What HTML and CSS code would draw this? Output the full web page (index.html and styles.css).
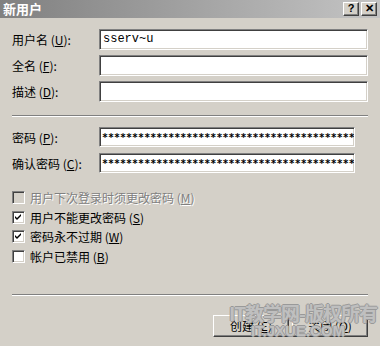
FILE: index.html
```html
<!DOCTYPE html>
<html lang="zh-CN">
<head>
    <meta charset="UTF-8">
    <title>新用户</title>
    <link rel="stylesheet" href="styles.css">
</head>
<body>
<div class="dialog">
    <div class="titlebar">
        <span class="title">新用户</span>
        <div class="tb-buttons">
            <span class="tb-btn">?</span>
            <span class="tb-btn">&#x2715;</span>
        </div>
    </div>
    <div class="content">
        <div class="fields">
            <div class="row">
                <label>用户名 (<u>U</u>):</label>
                <div class="input">sserv~u</div>
            </div>
            <div class="row">
                <label>全名 (<u>F</u>):</label>
                <div class="input"></div>
            </div>
            <div class="row">
                <label>描述 (<u>D</u>):</label>
                <div class="input"></div>
            </div>
        </div>
        <div class="sep"></div>
        <div class="fields pw">
            <div class="row">
                <label>密码 (<u>P</u>):</label>
                <div class="input short stars">******************************************</div>
            </div>
            <div class="row">
                <label>确认密码 (<u>C</u>):</label>
                <div class="input short stars">******************************************</div>
            </div>
        </div>
        <div class="checks">
            <div class="check disabled"><span class="box"></span>用户下次登录时须更改密码 (<u>M</u>)</div>
            <div class="check"><span class="box"><svg width="7" height="7" viewBox="0 0 7 7"><path d="M0 2 L2 4 L6 0 L6 2 L2 6 L0 4 Z" fill="#000"/></svg></span>用户不能更改密码 (<u>S</u>)</div>
            <div class="check"><span class="box"><svg width="7" height="7" viewBox="0 0 7 7"><path d="M0 2 L2 4 L6 0 L6 2 L2 6 L0 4 Z" fill="#000"/></svg></span>密码永不过期 (<u>W</u>)</div>
            <div class="check"><span class="box"></span>帐户已禁用 (<u>B</u>)</div>
        </div>
        <div class="sep bottom"></div>
        <div class="actions">
            <span class="btn">创建 (<u>E</u>)</span>
            <span class="btn">关闭 (<u>O</u>)</span>
        </div>
        <div class="watermark">
            <div class="wm1">IT教学网-版权所有</div>
            <div class="wm2">IT.JXUE.COM</div>
        </div>
    </div>
</div>
</body>
</html>
```

FILE: styles.css
```css
*{
    margin: 0px;
    padding: 0px;
    box-sizing: border-box;
}
body{
    font-family: "Noto Sans CJK SC", "Liberation Sans", sans-serif;
    font-size: 12px;
    color: #000;
    background: #d4d0c8;
}
.dialog{
    width: 380px;
    height: 346px;
    background: #d4d0c8;
    position: relative;
    overflow: hidden;
}
.titlebar{
    height: 18px;
    background: linear-gradient(to right, #808080, #c4c4c4);
    display: flex;
    align-items: center;
    justify-content: space-between;
    padding: 0 3px 0 3px;
}
.title{
    color: #fff;
    font-weight: bold;
    font-size: 13px;
    line-height: 14px;
}
.tb-buttons{
    display: flex;
    gap: 2px;
}
.tb-btn{
    width: 16px;
    height: 14px;
    background: #d4d0c8;
    border-top: 1px solid #fff;
    border-left: 1px solid #fff;
    border-right: 1px solid #404040;
    border-bottom: 1px solid #404040;
    box-shadow: inset -1px -1px #808080;
    font-family: "Liberation Sans", sans-serif;
    font-weight: bold;
    font-size: 11px;
    line-height: 11px;
    text-align: center;
}
.content{
    padding: 11px 12px 0 12px;
}
.fields{
    display: flex;
    flex-direction: column;
    gap: 5px;
}
.row{
    display: flex;
    align-items: center;
    height: 21px;
}
.row label{
    width: 87px;
    flex: none;
}
.input{
    width: 269px;
    height: 100%;
    background: #fff;
    border-top: 1px solid #808080;
    border-left: 1px solid #808080;
    border-right: 1px solid #fff;
    border-bottom: 1px solid #fff;
    box-shadow: inset 1px 1px #404040, inset -1px -1px #d4d0c8;
    padding: 1px 3px;
    font-family: "Liberation Mono", monospace;
    font-size: 12px;
    line-height: 17px;
    overflow: hidden;
    white-space: nowrap;
}
.input.short{
    width: 256px;
}
.stars{
    font-family: "DejaVu Sans Mono", monospace;
    font-size: 10px;
    font-weight: bold;
    line-height: 18px;
    padding-left: 2px;
}
.sep{
    height: 2px;
    border-top: 1px solid #808080;
    border-bottom: 1px solid #fff;
    margin-top: 13px;
}
.pw{
    margin-top: 10px;
    gap: 6px;
}
.pw .row{
    height: 20px;
}
.checks{
    margin-top: 15px;
    display: flex;
    flex-direction: column;
}
.check{
    display: flex;
    align-items: center;
    height: 19.5px;
}
.check .box{
    width: 13px;
    height: 13px;
    flex: none;
    margin-right: 5px;
    background: #fff;
    border-top: 1px solid #808080;
    border-left: 1px solid #808080;
    border-right: 1px solid #fff;
    border-bottom: 1px solid #fff;
    box-shadow: inset 1px 1px #404040, inset -1px -1px #d4d0c8;
    display: flex;
    align-items: center;
    justify-content: center;
}
.check.disabled{
    color: #808080;
    text-shadow: 1px 1px #fff;
}
.check.disabled .box{
    background: #d4d0c8;
}
.sep.bottom{
    margin-top: 28px;
}
.actions{
    margin-top: 19px;
    display: flex;
    justify-content: flex-end;
    gap: 3px;
}
.btn{
    width: 76px;
    height: 22px;
    background: #d4d0c8;
    border-top: 1px solid #fff;
    border-left: 1px solid #fff;
    border-right: 1px solid #404040;
    border-bottom: 1px solid #404040;
    box-shadow: inset -1px -1px #808080;
    text-align: center;
    line-height: 19px;
}
.watermark{
    position: absolute;
    left: 228px;
    top: 302px;
    width: 150px;
    text-align: center;
    color: rgba(255, 255, 255, 0.4);
    text-shadow: 1px 0 #999, -1px 0 #999, 0 1px #999, 0 -1px #999;
    font-weight: bold;
    pointer-events: none;
}
.wm1{
    font-size: 19px;
    line-height: 22px;
    letter-spacing: -1px;
}
.wm2{
    font-family: "Liberation Sans", sans-serif;
    font-size: 15px;
    line-height: 14px;
    margin-left: -10px;
}
```
